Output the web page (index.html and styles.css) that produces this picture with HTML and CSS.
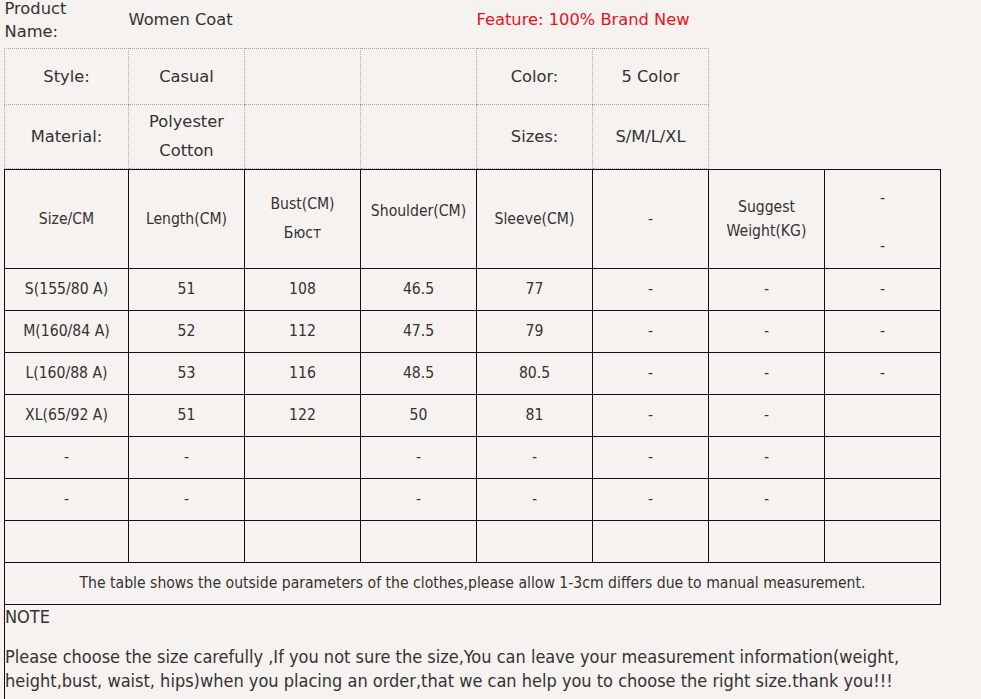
FILE: index.html
```html
<!DOCTYPE html>
<html>
<head>
<meta charset="utf-8">
<title>Women Coat</title>
<link rel="stylesheet" href="styles.css">
</head>
<body>
<div class="page">
  <table class="info">
    <colgroup><col class="w1"><col class="w"><col class="w"><col class="w"><col class="w"><col class="w"></colgroup>
    <tr class="r0">
      <td class="lft"><div class="pname">Product<br>Name:</div></td>
      <td class="lft top">Women Coat</td>
      <td></td>
      <td></td>
      <td class="lft red top" colspan="2">Feature: 100% Brand New</td>
    </tr>
    <tr class="r1">
      <td class="b">Style:</td>
      <td class="b">Casual</td>
      <td class="b"></td>
      <td class="b"></td>
      <td class="b">Color:</td>
      <td class="b">5 Color</td>
    </tr>
    <tr class="r2">
      <td class="b">Material:</td>
      <td class="b tall">Polyester<br>Cotton</td>
      <td class="b"></td>
      <td class="b"></td>
      <td class="b">Sizes:</td>
      <td class="b">S/M/L/XL</td>
    </tr>
  </table>

  <table class="size">
    <colgroup><col class="w1"><col class="w"><col class="w"><col class="w"><col class="w"><col class="w"><col class="w"><col class="w"></colgroup>
    <tr class="head">
      <td>Size/CM</td>
      <td>Length(CM)</td>
      <td class="tall">Bust(CM)<br>Бюст</td>
      <td class="up">Shoulder(CM)</td>
      <td>Sleeve(CM)</td>
      <td>-</td>
      <td>Suggest<br>Weight(KG)</td>
      <td class="dashes"><div class="dash">-</div><div class="dash second">-</div></td>
    </tr>
    <tr><td>S(155/80 A)</td><td>51</td><td>108</td><td>46.5</td><td>77</td><td>-</td><td>-</td><td>-</td></tr>
    <tr><td>M(160/84 A)</td><td>52</td><td>112</td><td>47.5</td><td>79</td><td>-</td><td>-</td><td>-</td></tr>
    <tr><td>L(160/88 A)</td><td>53</td><td>116</td><td>48.5</td><td>80.5</td><td>-</td><td>-</td><td>-</td></tr>
    <tr><td>XL(65/92 A)</td><td>51</td><td>122</td><td>50</td><td>81</td><td>-</td><td>-</td><td></td></tr>
    <tr><td>-</td><td>-</td><td></td><td>-</td><td>-</td><td>-</td><td>-</td><td></td></tr>
    <tr><td>-</td><td>-</td><td></td><td>-</td><td>-</td><td>-</td><td>-</td><td></td></tr>
    <tr><td></td><td></td><td></td><td></td><td></td><td></td><td></td><td></td></tr>
    <tr><td colspan="8">The table shows the outside parameters of the clothes,please allow 1-3cm differs due to manual measurement.</td></tr>
  </table>

  <div class="note">
    <p class="note-title">NOTE</p>
    <p class="note-text">Please choose the size carefully ,If you not sure the size,You can leave your measurement information(weight, height,bust, waist, hips)when you placing an order,that we can help you to choose the right size.thank you!!!</p>
  </div>
</div>
</body>
</html>
```

FILE: styles.css
```css
html, body {
  margin: 0;
  padding: 0;
  background: #f6f2ef;
}

.page {
  padding-left: 4px;
  color: #333;
}

table {
  border-collapse: collapse;
  table-layout: fixed;
}

col.w1 { width: 124px; }
col.w { width: 116px; }

td {
  padding: 0;
  text-align: center;
  vertical-align: middle;
}

/* info table */
.info {
  width: 704px;
  font-family: "DejaVu Sans", Verdana, sans-serif;
  font-size: 16.3px;
  line-height: 23px;
}

.info .r0 { height: 48px; }
.info .r0 td { vertical-align: top; }
.info .r0 td.top { padding-top: 8px; }
.pname { margin-top: -3px; }
.info .r1 { height: 56px; }
.info .r2 { height: 64px; }

.info .lft { text-align: left; }
.info .red { color: #e5121b; }

.info td.b {
  border: 1px dotted #a9a6a4;
}

.info .tall { line-height: 29px; }

/* size table */
.size {
  width: 936px;
  font-family: "DejaVu Sans Condensed", "DejaVu Sans", sans-serif;
  font-size: 15.6px;
  line-height: 24px;
}

.size tr { height: 42px; }
.size tr.head { height: 99px; }

.size td {
  border: 1px solid #111;
}

.size .tall { line-height: 29px; }
.size .up { padding-bottom: 16px; }

.dash { line-height: 24px; }
.dash.second { margin-top: 24px; }
.size td.dashes { padding-top: 7px; }

/* note */
.note {
  width: 935px;
  border-left: 1px solid #111;
  font-family: "DejaVu Sans Condensed", "DejaVu Sans", sans-serif;
  font-size: 18px;
  line-height: 24px;
  height: 100px;
}

.note p { margin: 0; }
.note-title { margin-bottom: 16px !important; }
```
